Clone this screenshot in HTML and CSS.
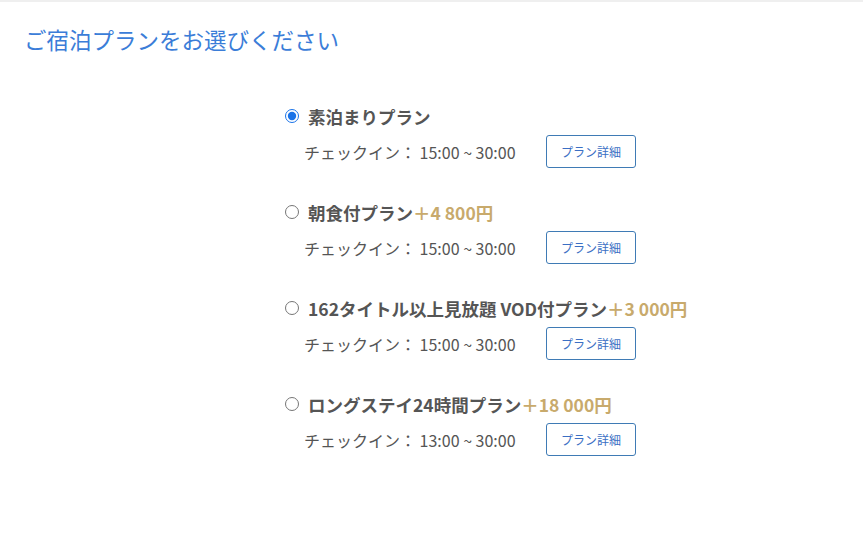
FILE: index.html
```html
<!DOCTYPE html>
<html>
<head>
    <title>ご宿泊プラン</title>
    <link rel="stylesheet" href="styles.css">
</head>
<body>
    <header>
        <h1>ご宿泊プランをお選びください</h1>
    </header>

    <div class="plans">
        <div class="plan">
            <label class="plan-title">
                <input type="radio" name="plan" checked>
                <span>素泊まりプラン</span>
            </label>
            <div class="plan-detail">
                <span class="checkin">チェックイン： 15:00 ~ 30:00</span>
                <button type="button">プラン詳細</button>
            </div>
        </div>

        <div class="plan">
            <label class="plan-title">
                <input type="radio" name="plan">
                <span>朝食付プラン<em class="price">＋4 800円</em></span>
            </label>
            <div class="plan-detail">
                <span class="checkin">チェックイン： 15:00 ~ 30:00</span>
                <button type="button">プラン詳細</button>
            </div>
        </div>

        <div class="plan">
            <label class="plan-title">
                <input type="radio" name="plan">
                <span>162タイトル以上見放題 VOD付プラン<em class="price">＋3 000円</em></span>
            </label>
            <div class="plan-detail">
                <span class="checkin">チェックイン： 15:00 ~ 30:00</span>
                <button type="button">プラン詳細</button>
            </div>
        </div>

        <div class="plan">
            <label class="plan-title">
                <input type="radio" name="plan">
                <span>ロングステイ24時間プラン<em class="price">＋18 000円</em></span>
            </label>
            <div class="plan-detail">
                <span class="checkin">チェックイン： 13:00 ~ 30:00</span>
                <button type="button">プラン詳細</button>
            </div>
        </div>
    </div>
</body>
</html>
```

FILE: styles.css
```css
body {
    margin: 0;
    background-color: white;
    font-family: "Noto Sans CJK JP", "Noto Sans", sans-serif;
    color: #555;
    border-top: 2px solid #efefef;
}

/* Page title */
header h1 {
    margin: 0;
    padding: 22px 24px 0;
    font-size: 22.5px;
    line-height: 30px;
    font-weight: normal;
    color: #3b7dd8;
}

/* Plan list */
.plans {
    margin-top: 50px;
    margin-left: 285px;
}

.plan {
    margin-bottom: 32px;
}

.plan-title {
    display: flex;
    align-items: center;
    height: 24px;
    font-size: 17.5px;
    font-weight: bold;
    color: #555;
    cursor: pointer;
}

.plan-title input {
    width: 14px;
    height: 14px;
    margin: 0 9px 0 0;
    accent-color: #1a73e8;
}

.price {
    font-style: normal;
    color: #c8aa6c;
}

/* Check-in row */
.plan-detail {
    display: flex;
    align-items: center;
    margin-top: 7px;
    padding-left: 19px;
}

.checkin {
    width: 242px;
    font-size: 16px;
    color: #555;
}

button {
    width: 90px;
    height: 33px;
    padding: 0;
    background-color: white;
    border: 1px solid #3f7bb5;
    border-radius: 3px;
    font-family: inherit;
    font-size: 12px;
    color: #3b6fc4;
    cursor: pointer;
}

button:hover {
    background-color: #f0f6fc;
}
```
